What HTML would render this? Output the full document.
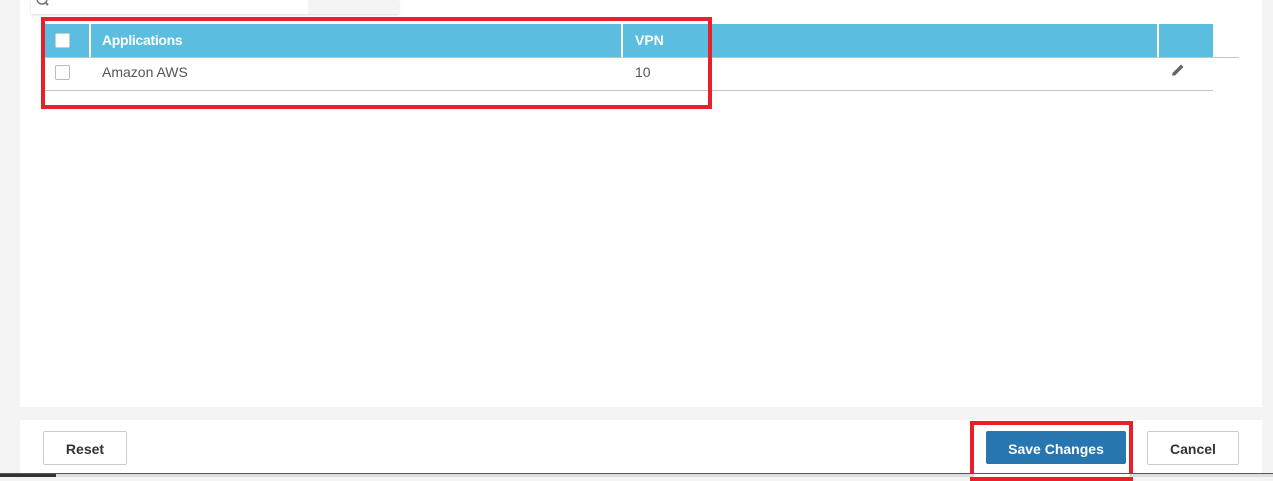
<!DOCTYPE html>
<html><head><style>
body{margin:0;width:1273px;height:477px;background:#f4f4f4;position:relative;overflow:hidden;font-family:"Liberation Sans",sans-serif;}
.abs{position:absolute;box-sizing:border-box}
</style></head><body>
<div class="abs" style="left:20px;top:0;width:1242px;height:407px;background:#fff"></div>
<div class="abs" style="left:31px;top:0;width:368px;height:14px;background:#fff;box-shadow:0 1px 2px rgba(0,0,0,.15)"></div>
<div class="abs" style="left:308px;top:0;width:91px;height:14px;background:#f4f4f4"></div>
<svg class="abs" style="left:36px;top:0" width="16" height="8" viewBox="0 0 16 8"><circle cx="6" cy="-1" r="5" fill="none" stroke="#777" stroke-width="1.5"/><path d="M9.5 2.5 L12 5" stroke="#777" stroke-width="2"/></svg>
<!-- header -->
<div class="abs" style="left:45px;top:24px;width:1168px;height:33px;background:#5bbddf"></div>
<div class="abs" style="left:89px;top:24px;width:2px;height:33px;background:#fff"></div>
<div class="abs" style="left:621px;top:24px;width:2px;height:33px;background:#fff"></div>
<div class="abs" style="left:1157px;top:24px;width:2px;height:33px;background:#fff"></div>
<div class="abs" style="left:55px;top:33px;width:15px;height:15px;background:#fff;border:1px solid #ccc;border-radius:2px"></div>
<div class="abs" style="left:102px;top:32px;color:#fff;font-weight:bold;font-size:14px;letter-spacing:-0.3px">Applications</div>
<div class="abs" style="left:635px;top:32px;color:#fff;font-weight:bold;font-size:14px">VPN</div>
<div class="abs" style="left:45px;top:57px;width:1194px;height:1px;background:#c4c4c4"></div>
<!-- row -->
<div class="abs" style="left:55px;top:65px;width:15px;height:15px;background:#fff;border:1px solid #bbb;border-radius:2px"></div>
<div class="abs" style="left:102px;top:64px;color:#555;font-size:14px">Amazon AWS</div>
<div class="abs" style="left:635px;top:64px;color:#555;font-size:14px">10</div>
<div class="abs" style="left:45px;top:90px;width:1168px;height:1px;background:#c4c4c4"></div>
<svg class="abs" style="left:1170px;top:62px" width="16" height="16" viewBox="0 0 16 16"><path d="M2 13.5 L2.5 11 L11 2.5 L13.5 5 L5 13.5 Z" fill="#666"/></svg>
<div class="abs" style="left:41px;top:17px;width:671px;height:92px;border:4px solid #e8202a"></div>
<!-- footer -->
<div class="abs" style="left:20px;top:420px;width:1242px;height:53px;background:#fff"></div>
<div class="abs" style="left:43px;top:431px;width:84px;height:34px;border:1px solid #ccc;border-radius:2px;background:#fff;color:#333;font-size:14px;font-weight:bold;text-align:center;line-height:34px">Reset</div>
<div class="abs" style="left:986px;top:431px;width:140px;height:33px;background:#2776b0;border-radius:2px;color:#fff;font-size:14px;font-weight:bold;text-align:center;line-height:36px">Save Changes</div>
<div class="abs" style="left:1147px;top:431px;width:92px;height:34px;border:1px solid #ccc;border-radius:2px;background:#fff;color:#333;font-size:14px;font-weight:bold;text-align:center;line-height:34px">Cancel</div>
<div class="abs" style="left:970px;top:421px;width:163px;height:60px;border:4px solid #e8202a"></div>
<div class="abs" style="left:0;top:473px;width:1273px;height:1px;background:#555"></div>
<div class="abs" style="left:0;top:474px;width:1273px;height:3px;background:#ddd"></div>
<div class="abs" style="left:0;top:474px;width:56px;height:3px;background:#333"></div>
<div class="abs" style="left:974px;top:474px;width:155px;height:3px;background:#fff"></div>
</body></html>
